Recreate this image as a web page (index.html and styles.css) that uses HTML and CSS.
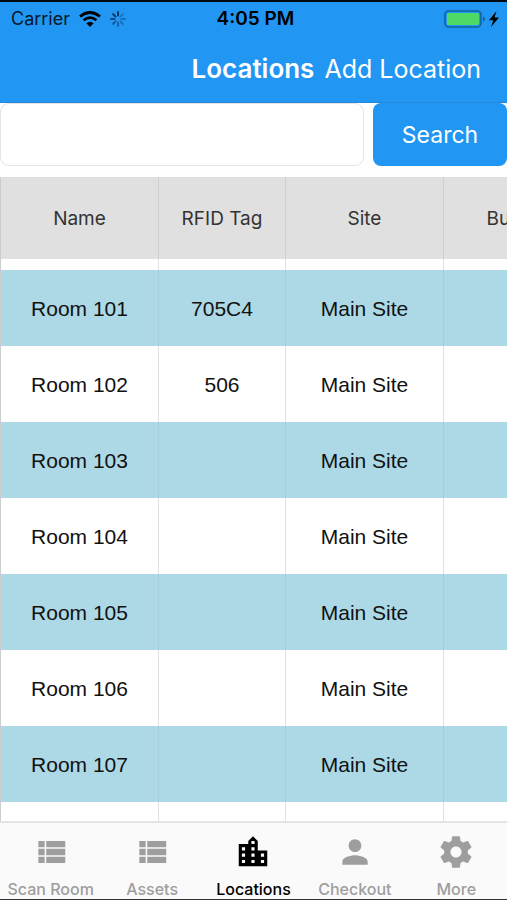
FILE: index.html
```html
<!DOCTYPE html>
<html lang="en">
<head>
<meta charset="utf-8">
<meta name="viewport" content="width=device-width, initial-scale=1">
<title>Locations</title>
<link rel="stylesheet" href="styles.css">
</head>
<body>
<div class="app">
  <header class="header">
    <div class="status">
      <div class="status-left">
        <span>Carrier</span>
        <svg class="wifi" viewBox="0 0 22 16" aria-hidden="true">
          <path d="M11 16L7.4 12.2Q11 9.2 14.6 12.2Z" fill="#000"/>
          <path d="M4.6 9.3Q11 3.9 17.4 9.3" fill="none" stroke="#000" stroke-width="2.8"/>
          <path d="M1 5.5Q11-2.6 21 5.5" fill="none" stroke="#000" stroke-width="2.8"/>
        </svg>
        <svg class="spinner" viewBox="0 0 16 16" aria-hidden="true">
          <g stroke="#06294a" stroke-width="1.8" stroke-linecap="round">
            <path d="M8 1v3.6" opacity="1"/>
            <path d="M12.95 3.05l-2.5 2.5" opacity=".3"/>
            <path d="M15 8h-3.6" opacity=".35"/>
            <path d="M12.95 12.95l-2.5-2.5" opacity=".4"/>
            <path d="M8 15v-3.6" opacity=".5"/>
            <path d="M3.05 12.95l2.5-2.5" opacity=".6"/>
            <path d="M1 8h3.6" opacity=".7"/>
            <path d="M3.05 3.05l2.5 2.5" opacity=".9"/>
          </g>
        </svg>
      </div>
      <span class="clock">4:05 PM</span>
      <div class="status-right">
        <svg class="battery" viewBox="0 0 56 18" aria-hidden="true">
          <rect x="1" y="1" width="36" height="16" rx="4" fill="#2196f3" stroke="#11629f" stroke-width="1.6"/>
          <rect x="3" y="3" width="32" height="12" rx="1.5" fill="#4cd964"/>
          <path d="M39 6.500q2 .5 2 2.500t-2 2.500z" fill="#11629f"/>
          <path d="M52.500 1L45 10.200h4.300l-2.300 6.800 8-9.500h-4.500z" fill="#000"/>
        </svg>
      </div>
    </div>
    <div class="titlebar">
      <h1 class="title">Locations</h1>
      <a class="add" href="#add">Add Location</a>
    </div>
  </header>

  <form class="search">
    <input class="search-box" type="text" aria-label="Search locations">
    <button class="search-button" type="button">Search</button>
  </form>

  <main class="scroller">
    <table class="grid">
      <colgroup><col class="wide"><col class="narrow"><col class="wide"><col class="wide"></colgroup>
      <thead>
        <tr><th>Name</th><th>RFID Tag</th><th>Site</th><th>Building</th></tr>
      </thead>
      <tbody>
        <tr class="spacer"><td></td><td></td><td></td><td></td></tr>
        <tr class="tint"><td>Room 101</td><td>705C4</td><td>Main Site</td><td></td></tr>
        <tr><td>Room 102</td><td>506</td><td>Main Site</td><td></td></tr>
        <tr class="tint"><td>Room 103</td><td></td><td>Main Site</td><td></td></tr>
        <tr><td>Room 104</td><td></td><td>Main Site</td><td></td></tr>
        <tr class="tint"><td>Room 105</td><td></td><td>Main Site</td><td></td></tr>
        <tr><td>Room 106</td><td></td><td>Main Site</td><td></td></tr>
        <tr class="tint"><td>Room 107</td><td></td><td>Main Site</td><td></td></tr>
        <tr><td></td><td></td><td></td><td></td></tr>
      </tbody>
    </table>
  </main>

  <nav class="tabs">
    <a class="tab" href="#scan">
      <svg class="icon" viewBox="0 0 24 24" aria-hidden="true"><path d="M4 14h4v-4H4v4zm0 5h4v-4H4v4zM4 9h4V5H4v4zm5 5h12v-4H9v4zm0 5h12v-4H9v4zM9 5v4h12V5H9z"/></svg>
      <span>Scan Room</span>
    </a>
    <a class="tab" href="#assets">
      <svg class="icon" viewBox="0 0 24 24" aria-hidden="true"><path d="M4 14h4v-4H4v4zm0 5h4v-4H4v4zM4 9h4V5H4v4zm5 5h12v-4H9v4zm0 5h12v-4H9v4zM9 5v4h12V5H9z"/></svg>
      <span>Assets</span>
    </a>
    <a class="tab active" href="#locations" aria-current="page">
      <svg class="icon" viewBox="0 0 24 24" aria-hidden="true"><path d="M15 11V5l-3-3-3 3v2H3v14h18V11h-6zm-8 8H5v-2h2v2zm0-4H5v-2h2v2zm0-4H5V9h2v2zm6 8h-2v-2h2v2zm0-4h-2v-2h2v2zm0-4h-2V9h2v2zm0-4h-2V5h2v2zm6 12h-2v-2h2v2zm0-4h-2v-2h2v2z"/></svg>
      <span>Locations</span>
    </a>
    <a class="tab" href="#checkout">
      <svg class="icon" viewBox="0 0 24 24" aria-hidden="true"><path d="M12 12c2.210 0 4-1.790 4-4s-1.790-4-4-4-4 1.790-4 4 1.790 4 4 4zm0 2c-2.670 0-8 1.340-8 4v2h16v-2c0-2.660-5.330-4-8-4z"/></svg>
      <span>Checkout</span>
    </a>
    <a class="tab" href="#more">
      <svg class="icon" viewBox="0 0 24 24" aria-hidden="true"><path d="M19.430 12.980c.04-.32.070-.64.070-.98s-.03-.66-.07-.98l2.110-1.650c.19-.15.240-.42.120-.64l-2-3.460c-.12-.22-.39-.3-.61-.22l-2.490 1c-.52-.4-1.080-.73-1.690-.98l-.38-2.650C14.460 2.180 14.250 2 14 2h-4c-.25 0-.46.180-.49.420l-.38 2.650c-.61.250-1.170.590-1.690.980l-2.490-1c-.23-.09-.49 0-.61.220l-2 3.460c-.13.220-.07.490.120.640l2.110 1.650c-.04.320-.07.650-.07.980s.03.660.070.980l-2.110 1.650c-.19.150-.24.420-.12.640l2 3.460c.12.220.39.300.61.220l2.490-1c.52.400 1.080.730 1.690.980l.38 2.650c.03.240.24.420.49.420h4c.25 0 .46-.18.490-.42l.38-2.650c.61-.25 1.170-.59 1.690-.98l2.490 1c.23.090.49 0 .61-.22l2-3.460c.12-.22.070-.49-.12-.64l-2.110-1.650zM12 15.500c-1.930 0-3.500-1.570-3.500-3.500s1.570-3.500 3.500-3.500 3.500 1.570 3.500 3.500-1.570 3.500-3.500 3.500z"/></svg>
      <span>More</span>
    </a>
  </nav>
</div>
</body>
</html>
```
FILE: styles.css
```css
* { box-sizing: border-box; }

body {
  margin: 0;
  background: #fff;
  color: #111;
  font-family: Inter, "Liberation Sans", sans-serif;
}

.app {
  display: flex;
  flex-direction: column;
  height: 100vh;
  border-top: 2px solid #02080f;
  border-bottom: 1px solid #333;
}

.header {
  flex: none;
  background: #2196f3;
  border-bottom: 1px solid #2489dc;
}

.status {
  display: grid;
  grid-template-columns: 1fr auto 1fr;
  align-items: center;
  height: 33px;
  padding: 0 7px 0 11px;
  color: #06182a;
  font-size: 18px;
  line-height: 24px;
}

.status-left { display: flex; align-items: center; gap: 9px; }
.status-right { display: flex; justify-content: flex-end; }
.clock { color: #000; font-size: 19px; font-weight: 600; }
.wifi { width: 22px; height: 16px; }
.spinner { width: 16px; height: 16px; }
.battery { width: 56px; height: 18px; }

.titlebar {
  display: flex;
  align-items: center;
  justify-content: flex-end;
  gap: 10px;
  height: 67px;
  padding: 0 26px 0 0;
  color: #fff;
  font-size: 25px;
  line-height: 32px;
}

.title { margin: 0; font-size: 26px; font-weight: 600; }
.add { color: #fff; text-decoration: none; }

.search {
  flex: none;
  display: flex;
  gap: 9px;
  margin-bottom: 11px;
}

.search-box {
  flex: 1;
  min-width: 0;
  height: 63px;
  padding: 0 16px;
  border: 1px solid #e4e4e4;
  border-radius: 9px;
  background: #fff;
  font: 21px "Liberation Sans", sans-serif;
}

.search-button {
  width: 134px;
  height: 63px;
  padding: 0;
  border: 0;
  border-radius: 8px;
  background: #2196f3;
  color: #fff;
  font: 23px Inter, sans-serif;
}

.scroller {
  flex: 1;
  min-height: 0;
  overflow: auto;
  scrollbar-width: none;
}

.grid {
  width: 602px;
  border-collapse: separate;
  border-spacing: 0;
  border-left: 1px solid #ccc;
  table-layout: fixed;
}

.wide { width: 158px; }
.narrow { width: 127px; }

.grid th {
  height: 82px;
  padding: 0;
  border-right: 1px solid #d0d0d0;
  background: #e0e0e0;
  color: #333;
  font-size: 19px;
  font-weight: 400;
}

.grid td {
  height: 76px;
  padding: 2px 0 0;
  border-right: 1px solid #e0e0e0;
  color: #111;
  font: 21px "Liberation Sans", sans-serif;
  text-align: center;
}

.grid .spacer td { height: 11px; }
.grid .tint td { background: #add8e6; border-right-color: #a9cfdc; }

.tabs {
  flex: none;
  display: grid;
  grid-template-columns: repeat(5, 1fr);
  height: 78px;
  border-top: 2px solid #e4e4e4;
  background: #fafafa;
}

.tab {
  display: flex;
  flex-direction: column;
  align-items: center;
  gap: 8px;
  padding-top: 10px;
  color: #9e9e9e;
  font-size: 16px;
  font-weight: 500;
  line-height: 20px;
  text-decoration: none;
  white-space: nowrap;
}

.tab.active { color: #000; }
.icon { width: 38px; height: 38px; fill: currentColor; }
```
